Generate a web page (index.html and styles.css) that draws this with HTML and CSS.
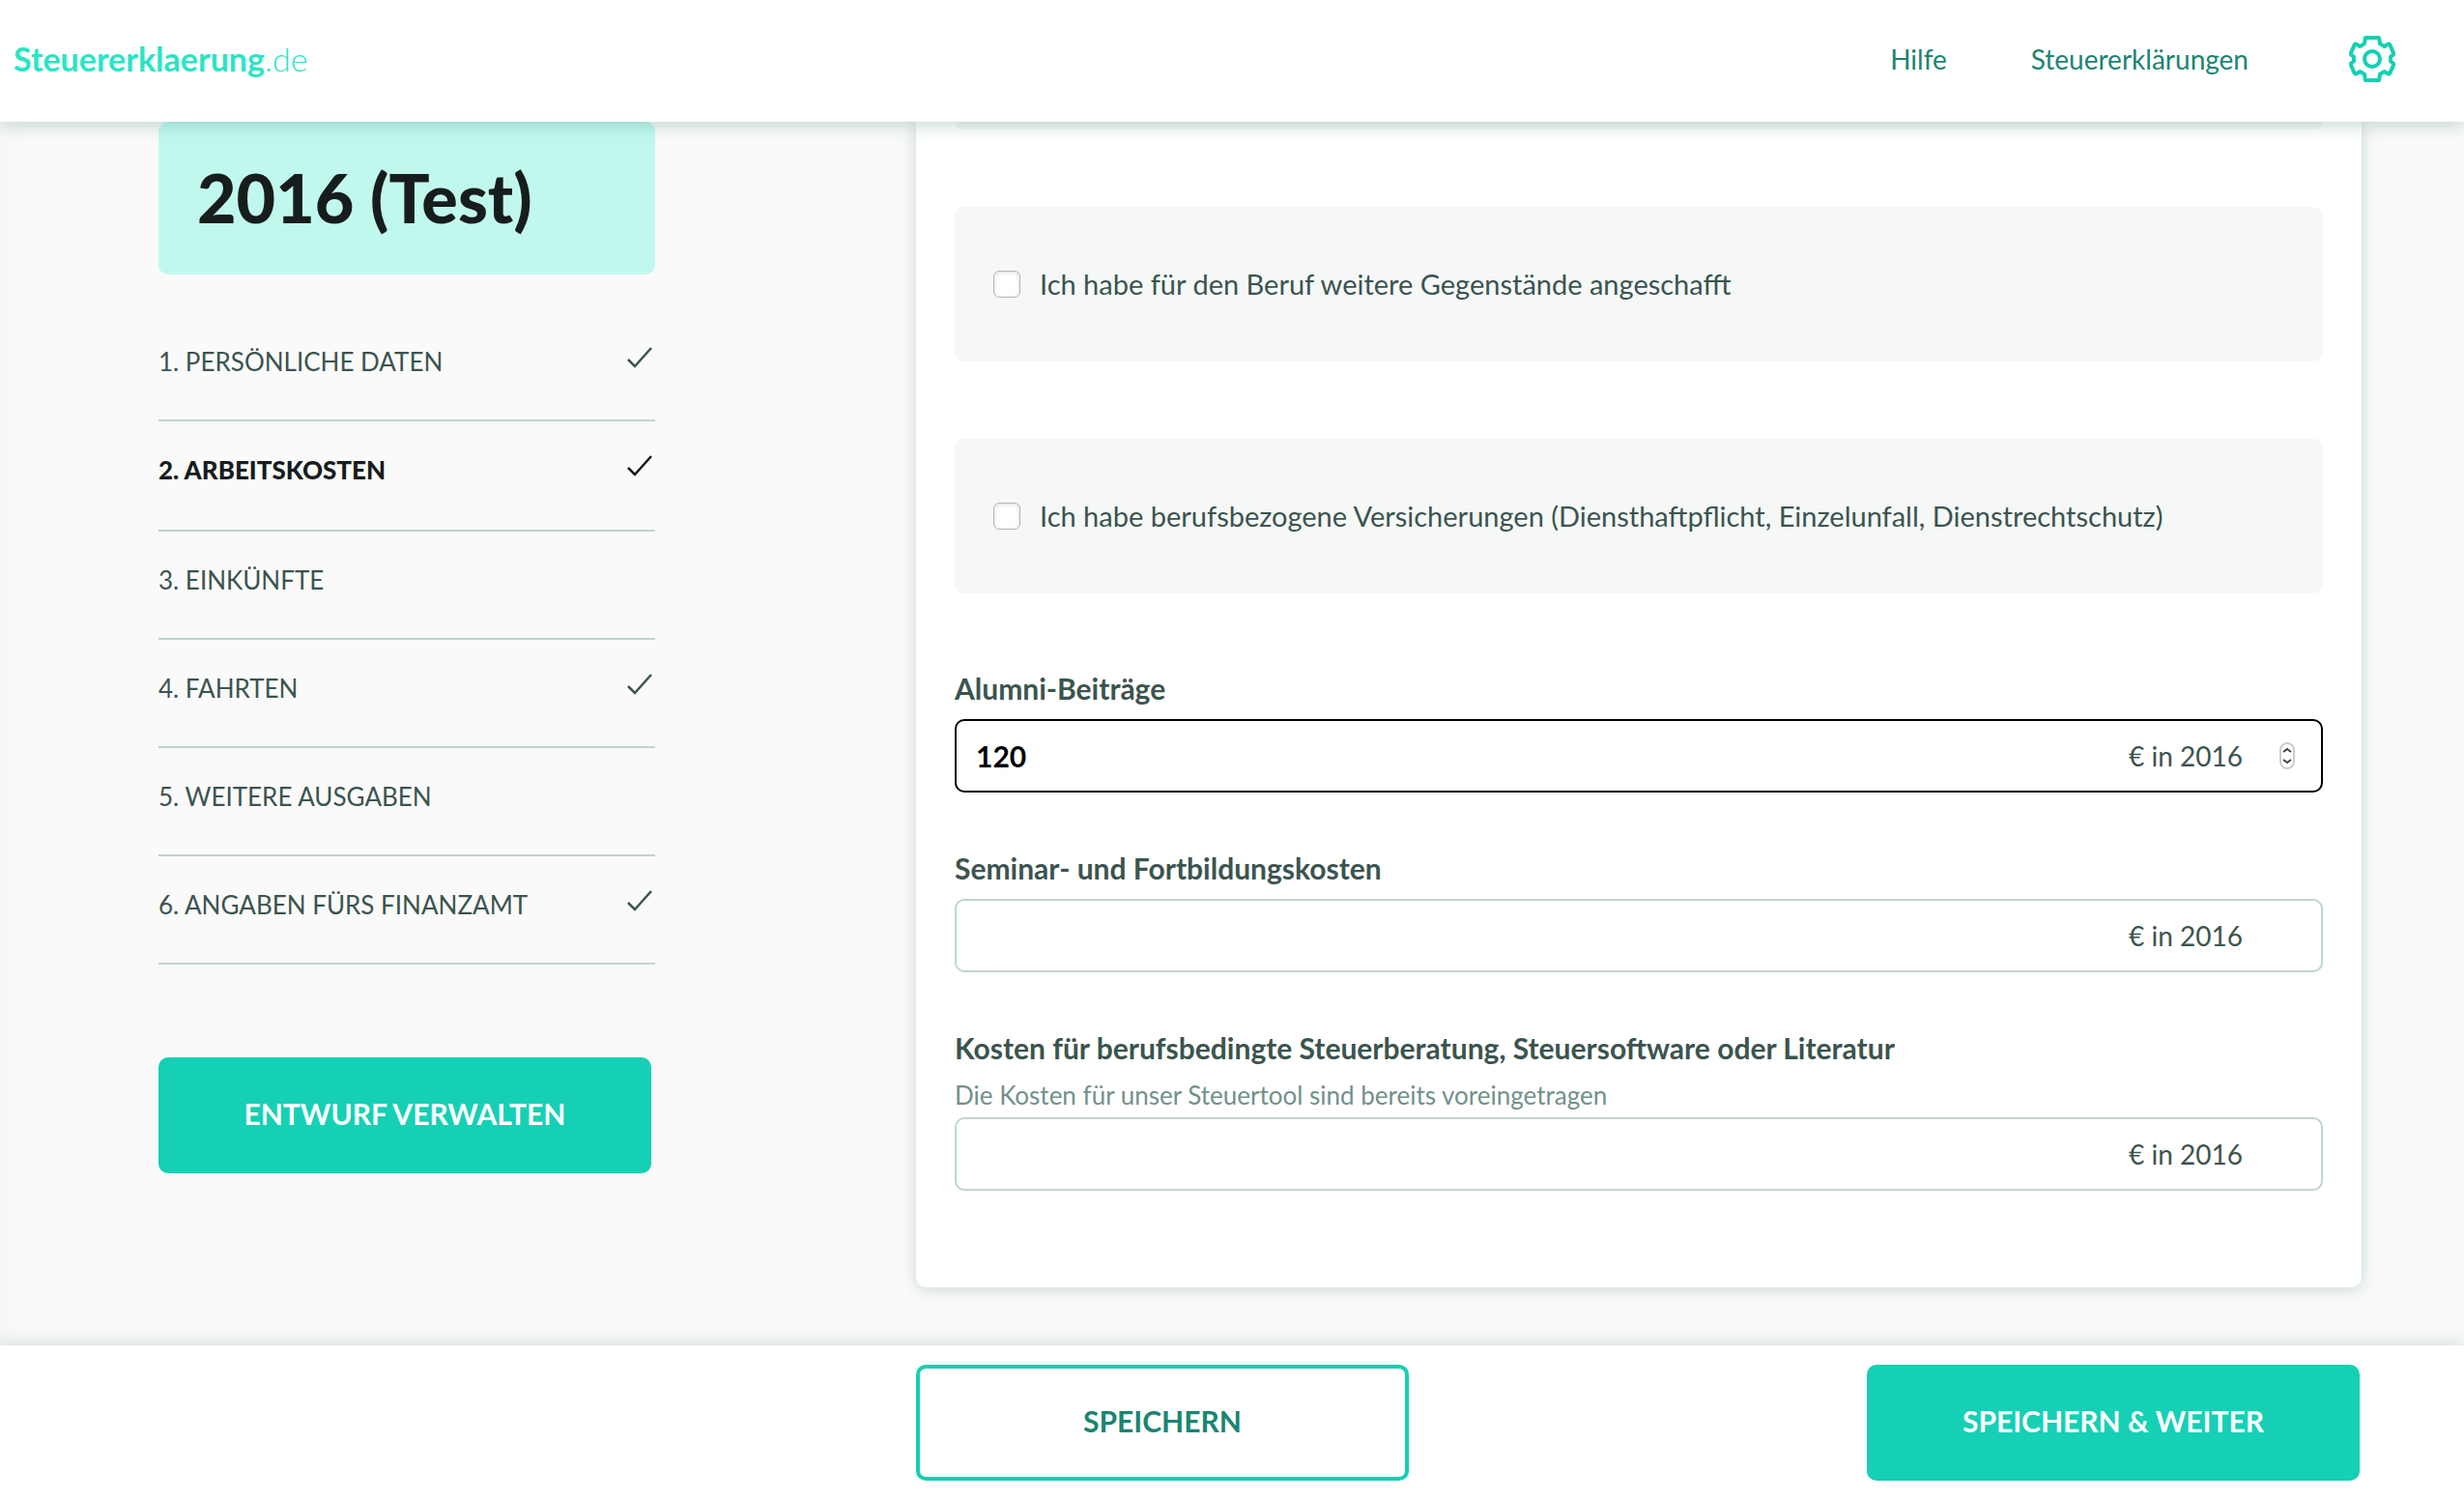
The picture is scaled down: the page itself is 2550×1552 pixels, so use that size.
FILE: index.html
```html
<!DOCTYPE html>
<html lang="de">
	<head>
		<meta charset="UTF-8" />
		<meta name="viewport" content="width=device-width, initial-scale=1.0" />
		<title>Steuererklaerung.de</title>
		<link rel="stylesheet" href="styles.css">
	</head>
	<body>
		<header class="header">
			<a class="logo" href="#"><strong>Steuererklaerung</strong>.de</a>
			<nav class="header-nav">
				<a href="#">Hilfe</a>
				<a href="#">Steuererklärungen</a>
				<button class="settings" type="button" aria-label="Einstellungen">
					<svg viewBox="0 0 144 144" fill="none" stroke="currentColor" stroke-width="12" stroke-linejoin="round">
						<path d="M54 6H90Q94 6 94 10L96 25 110 33 121 26Q125 24 127 28L138 53Q140 57 136 60L129 65V79L136 84Q140 87 138 91L127 116Q125 120 121 118L110 111 96 119 94 134Q94 138 90 138H54Q50 138 50 134L48 119 34 111 23 118Q19 120 17 116L6 91Q4 87 8 84L15 79V65L8 60Q4 57 6 53L17 28Q19 24 23 26L34 33 48 25 50 10Q50 6 54 6Z" />
						<circle cx="72" cy="72" r="24" />
					</svg>
				</button>
			</nav>
		</header>

		<main class="layout">
			<aside class="sidebar">
				<h1 class="year">2016 (Test)</h1>
				<nav class="steps">
					<a class="step" href="#">1. PERSÖNLICHE DATEN
						<svg class="check" viewBox="0 0 26 28"><path d="M1 16L8 23L25 4" /></svg>
					</a>
					<a class="step active" href="#">2. ARBEITSKOSTEN
						<svg class="check" viewBox="0 0 26 28"><path d="M1 16L8 23L25 4" /></svg>
					</a>
					<a class="step" href="#">3. EINKÜNFTE</a>
					<a class="step" href="#">4. FAHRTEN
						<svg class="check" viewBox="0 0 26 28"><path d="M1 16L8 23L25 4" /></svg>
					</a>
					<a class="step" href="#">5. WEITERE AUSGABEN</a>
					<a class="step" href="#">6. ANGABEN FÜRS FINANZAMT
						<svg class="check" viewBox="0 0 26 28"><path d="M1 16L8 23L25 4" /></svg>
					</a>
				</nav>
				<button class="btn" type="button">ENTWURF VERWALTEN</button>
			</aside>

			<form class="card" id="costs">
				<div class="panel-end"></div>
				<label class="panel">
					<input type="checkbox" />
					Ich habe für den Beruf weitere Gegenstände angeschafft
				</label>
				<label class="panel">
					<input type="checkbox" />
					Ich habe berufsbezogene Versicherungen (Diensthaftpflicht, Einzelunfall, Dienstrechtschutz)
				</label>

				<div class="fields">
					<div class="field">
						<label for="alumni">Alumni-Beiträge</label>
						<div class="amount current">
							<input type="number" id="alumni" value="120" />
							<span class="unit">€ in 2016</span>
							<svg class="spinner" viewBox="0 0 16 28">
								<rect x="1" y="1" width="14" height="26" rx="7" />
								<path d="M4 10L8 7L12 10M4 18L8 21L12 18" />
							</svg>
						</div>
					</div>
					<div class="field">
						<label for="seminar">Seminar- und Fortbildungskosten</label>
						<div class="amount">
							<input type="number" id="seminar" />
							<span class="unit">€ in 2016</span>
						</div>
					</div>
					<div class="field">
						<label for="advice">Kosten für berufsbedingte Steuerberatung, Steuersoftware oder Literatur</label>
						<p class="hint" id="advice-hint">Die Kosten für unser Steuertool sind bereits voreingetragen</p>
						<div class="amount">
							<input type="number" id="advice" aria-describedby="advice-hint" />
							<span class="unit">€ in 2016</span>
						</div>
					</div>
				</div>
			</form>
		</main>

		<footer class="footer">
			<div class="actions">
				<button class="btn btn-outline" type="submit" form="costs">SPEICHERN</button>
				<button class="btn" type="submit" form="costs">SPEICHERN &amp; WEITER</button>
			</div>
		</footer>
	</body>
</html>
```
FILE: styles.css
```css
* {
	box-sizing: border-box;
}
body {
	margin: 0;
	min-height: 100vh;
	display: flex;
	flex-direction: column;
	font-family: Lato, sans-serif;
	font-size: 28px;
	line-height: 36px;
	color: #3b544f;
	background: #fafafa linear-gradient(90deg, #f7f7f7, #fafafa 28px);
}
a {
	color: inherit;
	text-decoration: none;
}
button,
input {
	font: inherit;
}

/* header */
.header {
	position: sticky;
	top: 0;
	z-index: 2;
	display: flex;
	align-items: center;
	justify-content: space-between;
	height: 126px;
	padding: 0 71px 4px 14px;
	background: white;
	box-shadow: 0 2px 18px rgba(30, 110, 95, 0.3);
}
.logo {
	font-size: 34px;
	font-weight: 300;
	color: #2ae5c5;
}
.logo strong {
	font-weight: 700;
}
.header-nav {
	display: flex;
	align-items: center;
	gap: 87px;
	color: #1b8571;
}
.settings {
	width: 48px;
	height: 48px;
	margin-left: 17px;
	padding: 0;
	border: 0;
	background: none;
	color: #15d0b4;
}
.settings svg {
	display: block;
}

/* columns */
.layout,
.footer {
	display: grid;
	grid-template-columns: 514px 1fr;
	column-gap: 270px;
	padding: 0 106px 0 164px;
}
.layout {
	flex: 1;
	align-items: start;
	padding-bottom: 60px;
}

/* sidebar */
.year {
	margin: 0 0 40px;
	padding: 38px 40px 40px;
	border-radius: 10px;
	background: #c1f8ee;
	font-size: 70px;
	line-height: 80px;
	font-weight: 900;
	color: #161d1c;
}
.steps {
	margin-bottom: 96px;
}
.step {
	display: flex;
	justify-content: space-between;
	align-items: flex-start;
	padding: 32px 3px 42px 0;
	border-bottom: 2px solid #bdd5d2;
	font-size: 26px;
}
.step.active {
	padding-bottom: 44px;
	font-weight: 900;
	color: #161d1c;
}
.check {
	width: 26px;
	height: 28px;
	fill: none;
	stroke: currentColor;
	stroke-width: 2.5;
}

.btn {
	width: 510px;
	height: 120px;
	padding: 0 0 4px;
	border: 4px solid #15d0b4;
	border-radius: 10px;
	background: #15d0b4;
	color: white;
	font-size: 30px;
	font-weight: 700;
}
.btn-outline {
	background: white;
	color: #1b8571;
}

/* form */
.card {
	padding: 0 40px 100px;
	border-radius: 0 0 10px 10px;
	background: white;
	box-shadow: 0 2px 16px rgba(30, 110, 95, 0.24);
}
.panel-end {
	height: 8px;
	border-radius: 0 0 10px 10px;
	background: #f5f8f7;
}
.panel {
	display: flex;
	align-items: center;
	gap: 20px;
	min-height: 160px;
	margin-top: 80px;
	padding: 0 40px;
	border-radius: 10px;
	background: #f5f8f7;
	font-size: 29px;
}
.panel input {
	appearance: none;
	flex: none;
	width: 28px;
	height: 28px;
	margin: 0;
	border: 1px solid #b4b6b6;
	border-radius: 6px;
	background: white;
	box-shadow: inset 0 1px 4px rgba(0, 0, 0, 0.15);
}
.fields {
	display: flex;
	flex-direction: column;
	gap: 60px;
	margin-top: 80px;
}
.field label {
	display: block;
	margin-bottom: 14px;
	font-size: 30px;
	font-weight: 700;
}
.hint {
	margin: 0 0 6px;
	font-size: 26px;
	line-height: 34px;
	color: #71918b;
}
.amount {
	display: flex;
	align-items: center;
	height: 76px;
	padding: 0 27px 0 20px;
	border: 2px solid #bdd5d2;
	border-radius: 10px;
}
.amount.current {
	border-color: black;
}
.amount input {
	flex: 1;
	min-width: 0;
	padding: 0;
	border: 0;
	outline: 0;
	background: none;
	appearance: textfield;
	font-size: 30px;
	font-weight: 700;
	color: black;
}
.unit {
	margin-right: 54px;
}
.spinner {
	width: 16px;
	height: 28px;
	margin-left: -16px;
	fill: none;
	stroke: #444;
	stroke-width: 2;
}
.spinner rect {
	fill: white;
	stroke: #ccc;
}

/* save bar */
.footer {
	position: sticky;
	bottom: 0;
	padding-top: 20px;
	padding-bottom: 20px;
	background: white;
	box-shadow: 0 0 18px rgba(30, 110, 95, 0.24);
}
.actions {
	grid-column: 2;
	display: flex;
	justify-content: space-between;
	padding-right: 2px;
}
```
